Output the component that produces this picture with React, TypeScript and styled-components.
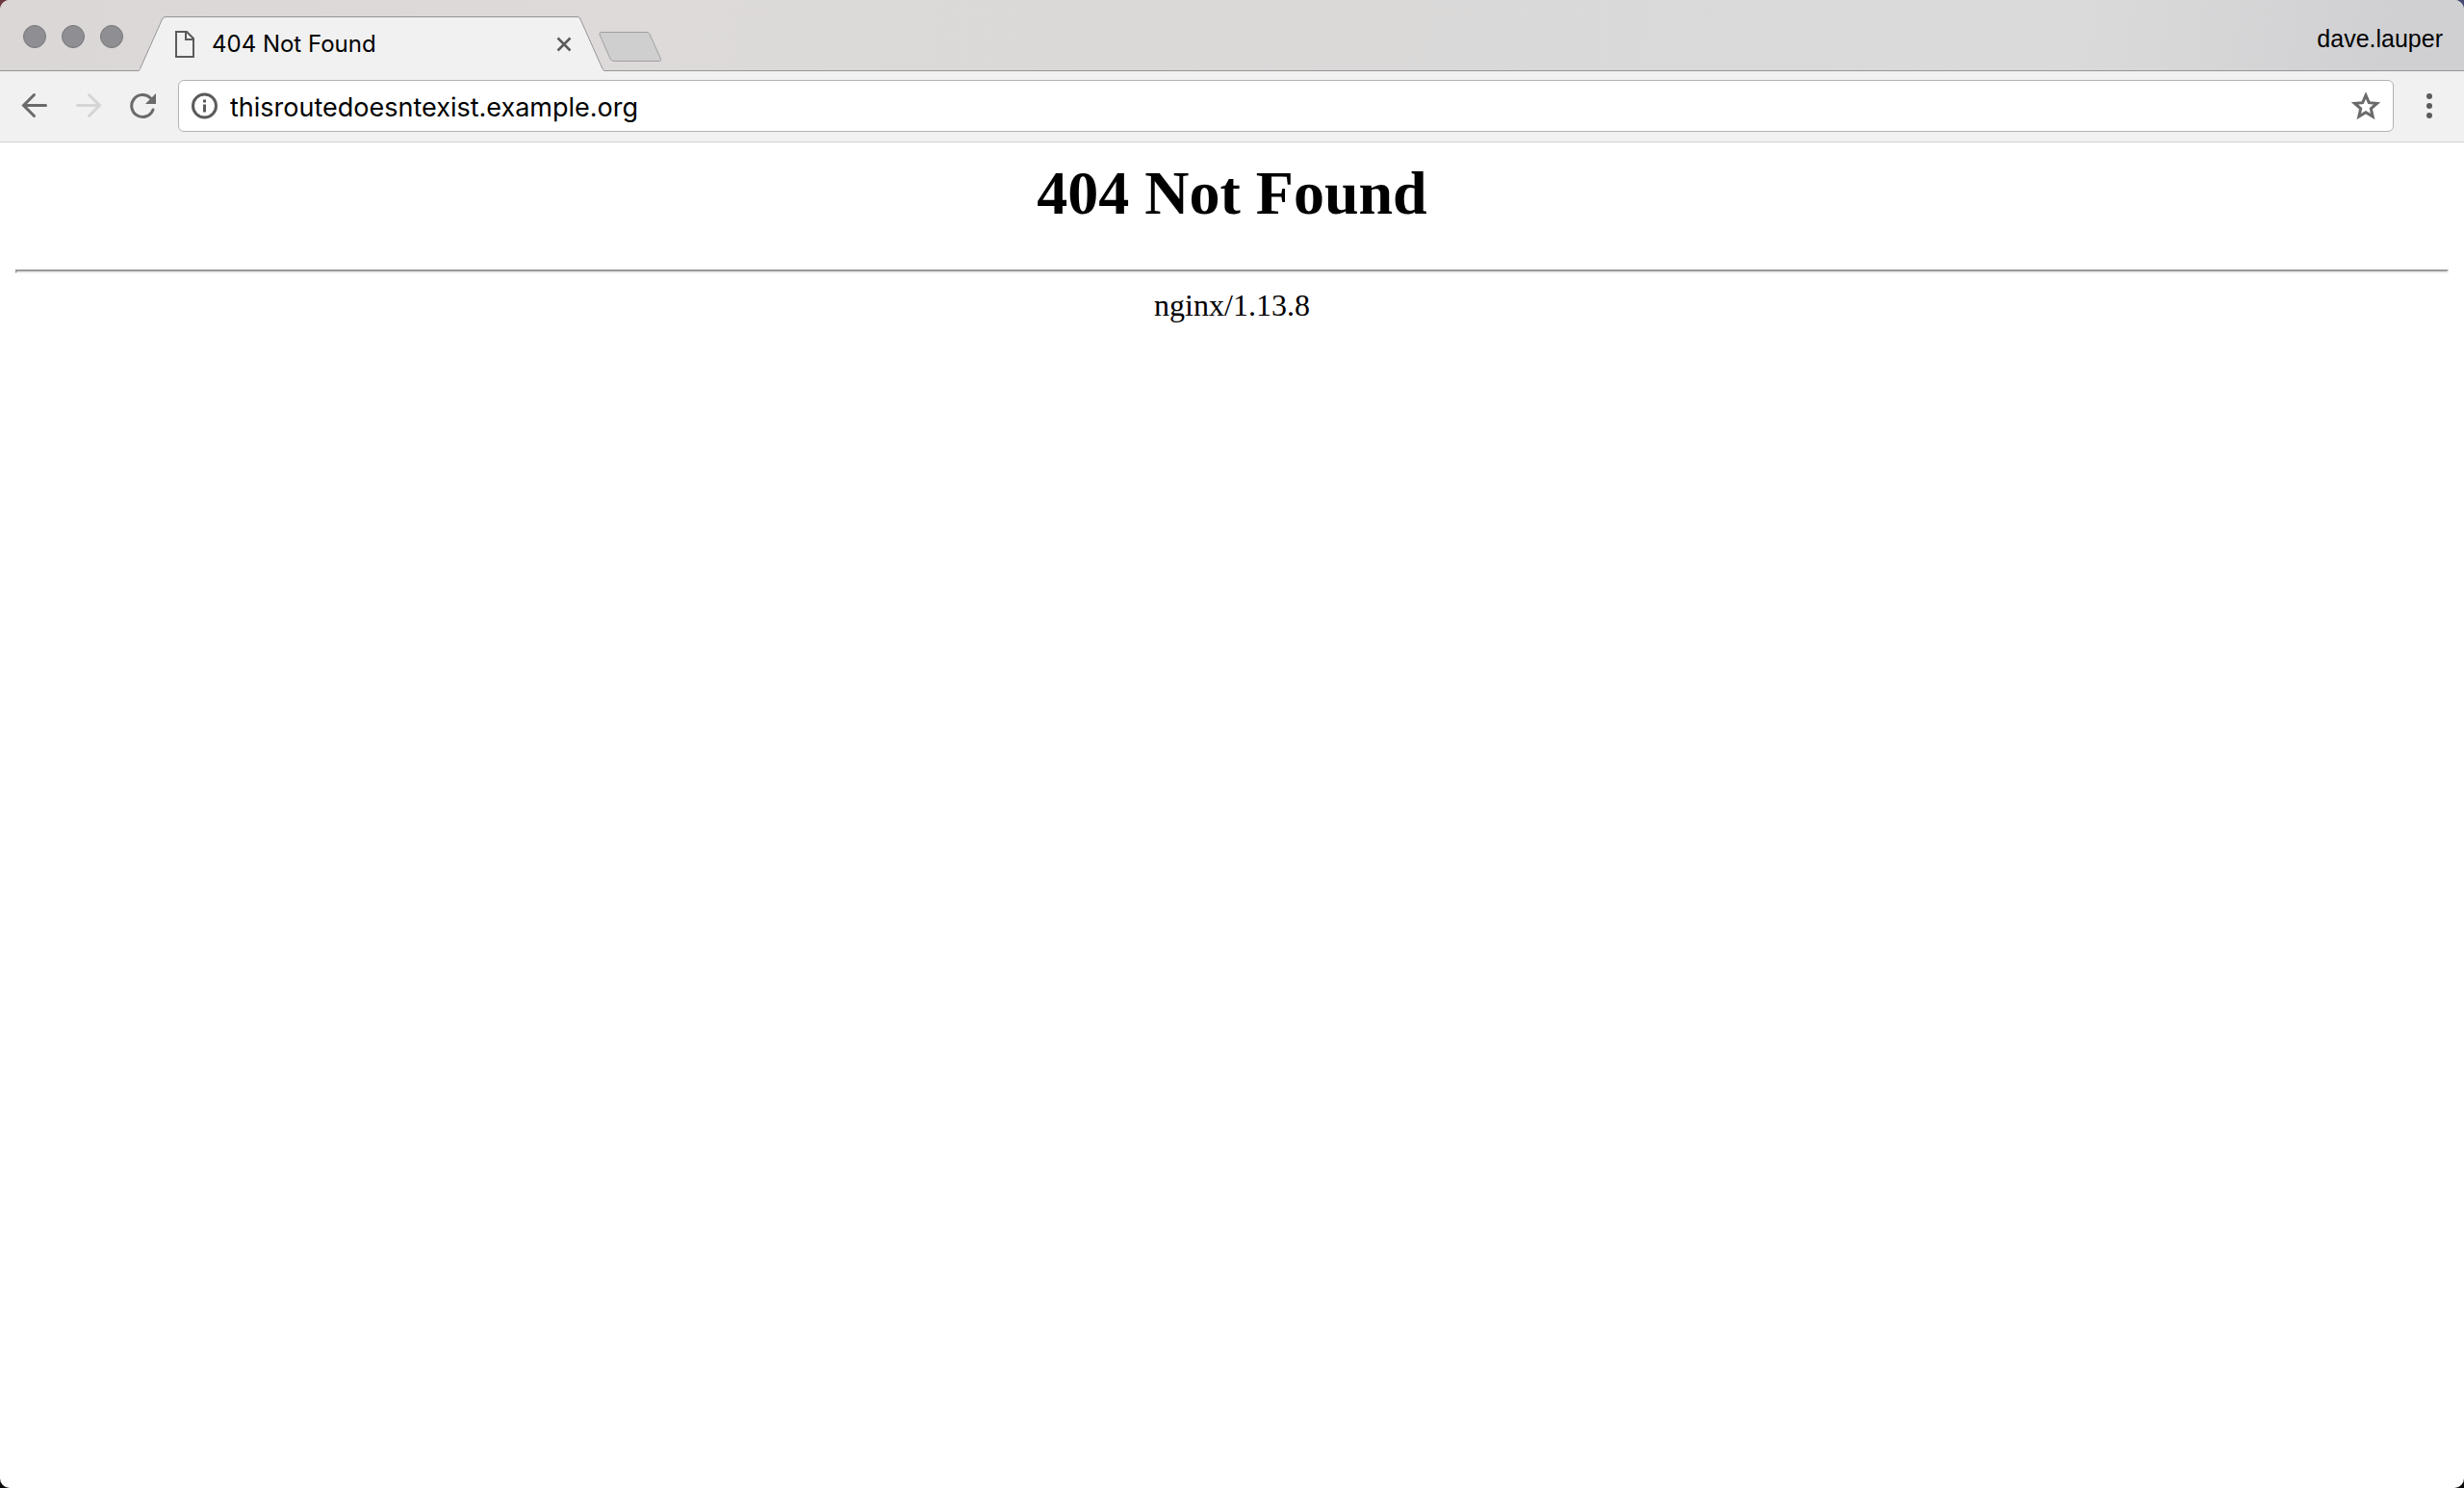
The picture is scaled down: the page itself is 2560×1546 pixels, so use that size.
import React from "react";
import styled, { createGlobalStyle } from "styled-components";

const uiFont = `Inter, Roboto, "Liberation Sans", sans-serif`;

const GlobalStyle = createGlobalStyle`
  *, *::before, *::after { box-sizing: border-box; }
  html { background: linear-gradient(#0000 50%, #0b0b0b 50%), linear-gradient(90deg, #6d3640 50%, #454a70 50%); }
  body { margin: 0; }
`;

const Window = styled.div`
  min-height: 100vh;
  display: flex;
  flex-direction: column;
  overflow: hidden;
  border-radius: 10px;
  background: #fff;
`;

const TabStrip = styled.header`
  display: flex;
  align-items: flex-end;
  height: 74px;
  padding-right: 22px;
  background: linear-gradient(100deg, #dad7d6 0%, #dddad9 26%, #dad9d8 50%, #dbdadb 84%, #d0d0d2 97%);
  box-shadow: inset 0 -1px #969496;
`;

const WindowControls = styled.div`
  display: flex;
  align-self: flex-start;
  gap: 16px;
  padding: 26px 16px 0 24px;
`;

const IconButton = styled.button`
  display: flex;
  align-items: center;
  justify-content: center;
  flex: none;
  padding: 0;
  border: 0;
  background: none;
  color: #6a6a6a;

  &:disabled { color: #d5d5d5; }
`;

const WindowButton = styled(IconButton)`
  width: 24px;
  height: 24px;
  border: 1px solid #77777b;
  border-radius: 50%;
  background: #8f8e93;
`;

const Tab = styled.div`
  display: flex;
  height: 57px;
`;

const TabEdge = styled.svg`
  display: block;
  flex: none;
  width: 28px;
  height: 57px;
`;

const TabBody = styled.div`
  display: flex;
  align-items: center;
  width: 428px;
  padding: 0 4px 0 9px;
  border-top: 1px solid #969496;
  background: #f1f1f1;
`;

const TabTitle = styled.span`
  flex: 1;
  padding-left: 17px;
  font: 24px/32px ${uiFont};
  color: #000;
`;

const NewTab = styled(IconButton)`
  margin: 0 0 9px -7px;
`;

const Profile = styled.button`
  margin: 0 0 18px auto;
  padding: 0;
  border: 0;
  background: none;
  font: 25px/32px "Liberation Sans", Arial, sans-serif;
  color: #000;
`;

const Toolbar = styled.nav`
  display: flex;
  align-items: center;
  height: 74px;
  padding: 0 21px 1px 22px;
  border-bottom: 1px solid #d0d0d0;
  background: #f1f1f1;
`;

const NavButtons = styled.div`
  display: flex;
  gap: 28px;
  padding-right: 22px;
`;

const AddressBar = styled.form`
  display: flex;
  flex: 1;
  align-items: center;
  height: 54px;
  margin-right: 22px;
  padding: 0 12px;
  border: 1px solid #b2b2b2;
  border-radius: 6px;
  background: #fff;
`;

const AddressInput = styled.input`
  flex: 1;
  min-width: 0;
  height: 38px;
  padding: 2px 12px 0 11px;
  border: 0;
  outline: 0;
  background: none;
  font: 27px/36px ${uiFont};
  color: #000;
`;

const Page = styled.main`
  flex: 1;
  padding: 16px;
  font: 32px/36px "Liberation Serif", "Times New Roman", serif;
  color: #000;
  text-align: center;
`;

const Heading = styled.h1`
  margin: 0 0 42px;
  font-size: 64px;
  line-height: 74px;
`;

const Rule = styled.hr`
  margin: 0 0 15px;
  border: 2px solid;
  border-color: #9a9a9a #eee #eee #9a9a9a;
  height: 4px;
`;

const Server = styled.p`
  margin: 0;
`;

export default function App() {
  return (
    <Window>
      <GlobalStyle />
      <TabStrip>
        <WindowControls>
          <WindowButton aria-label="Close window" />
          <WindowButton aria-label="Minimize window" />
          <WindowButton aria-label="Zoom window" />
        </WindowControls>
        <Tab>
          <TabEdge viewBox="0 0 28 57" aria-hidden="true">
            <path d="M0 57V56.5L1 55.5L24 3Q25.500 .5 28 .5V57Z" fill="#f1f1f1" />
            <path d="M0 56.5Q1 56 1.500 54.500L24.500 3Q25.500 .5 28 .5" fill="none" stroke="#969496" />
          </TabEdge>
          <TabBody>
            <svg width="22" height="28" viewBox="0 0 22 28" fill="none" stroke="#5b5b5b" strokeWidth="2" aria-hidden="true">
              <path d="M2 1H13L20 8V27H2Z" />
              <path d="M12 1V9H20" />
            </svg>
            <TabTitle>404 Not Found</TabTitle>
            <IconButton aria-label="Close tab">
              <svg width="20" height="20" viewBox="0 0 20 20" stroke="#5b5b5b" strokeWidth="2.500">
                <path d="M3.500 3.500L16.500 16.500M16.500 3.500L3.500 16.500" />
              </svg>
            </IconButton>
          </TabBody>
          <TabEdge viewBox="0 0 28 57" aria-hidden="true">
            <path d="M28 57V56.500L26.500 55L3 3Q2 .5 0 .5V57Z" fill="#f1f1f1" />
            <path d="M28 56.500Q26.500 56 26 54.500L3 3Q2 .5 0 .5" fill="none" stroke="#969496" />
          </TabEdge>
        </Tab>
        <NewTab aria-label="New tab">
          <svg width="67" height="33" viewBox="0 0 67 33">
            <path d="M4 1.500H51Q53 1.500 54 3.500L65 28Q66.500 31.500 64 31.500H17Q14.500 31.500 13 29L2 4Q1 1.500 4 1.500Z" fill="#cfcfcf" stroke="#a1a0a1" />
          </svg>
        </NewTab>
        <Profile>dave.lauper</Profile>
      </TabStrip>
      <Toolbar>
        <NavButtons>
          <IconButton aria-label="Back">
            <svg width="28" height="28" viewBox="0 0 28 28" fill="none" stroke="currentColor" strokeWidth="3" strokeLinecap="round">
              <path d="M25.500 13.500H3M13.500 2.500L2.500 13.500L13.500 24.500" />
            </svg>
          </IconButton>
          <IconButton aria-label="Forward" disabled>
            <svg width="28" height="28" viewBox="0 0 28 28" fill="none" stroke="currentColor" strokeWidth="3" strokeLinecap="round">
              <path d="M2.500 13.500H25M14.500 2.500L25.500 13.500L14.500 24.500" />
            </svg>
          </IconButton>
          <IconButton aria-label="Reload">
            <svg width="29" height="28" viewBox="0 0 29 28" fill="none" stroke="currentColor" strokeWidth="3">
              <path d="M22.500 6A11.500 11.500 0 1 0 25 18" strokeLinecap="round" />
              <path d="M28 1V12H17Z" fill="currentColor" stroke="none" />
            </svg>
          </IconButton>
        </NavButtons>
        <AddressBar onSubmit={(e) => e.preventDefault()}>
          <IconButton type="button" aria-label="Site information">
            <svg width="30" height="28" viewBox="0 0 30 28" fill="none" stroke="#5b5b5b">
              <circle cx="14.500" cy="14" r="12" strokeWidth="3" />
              <path d="M14.500 7.500V10.500M14.500 12.500V20.500" strokeWidth="3" />
            </svg>
          </IconButton>
          <AddressInput aria-label="Address" defaultValue="thisroutedoesntexist.example.org" spellCheck={false} />
          <IconButton type="button" aria-label="Bookmark this page">
            <svg width="32" height="30" viewBox="0 0 32 30" fill="none" stroke="currentColor" strokeWidth="3">
              <path d="M16 4L19.300 11.700L27.600 12.400L21.300 17.900L23.200 26.100L16 21.800L8.800 26.100L10.700 17.900L4.400 12.400L12.700 11.700Z" />
            </svg>
          </IconButton>
        </AddressBar>
        <IconButton aria-label="Menu">
          <svg width="30" height="28" viewBox="0 0 30 28" fill="#5b5b5b">
            <circle cx="15" cy="4" r="3" />
            <circle cx="15" cy="14" r="3" />
            <circle cx="15" cy="24" r="3" />
          </svg>
        </IconButton>
      </Toolbar>
      <Page>
        <Heading>404 Not Found</Heading>
        <Rule />
        <Server>nginx/1.13.8</Server>
      </Page>
    </Window>
  );
}
